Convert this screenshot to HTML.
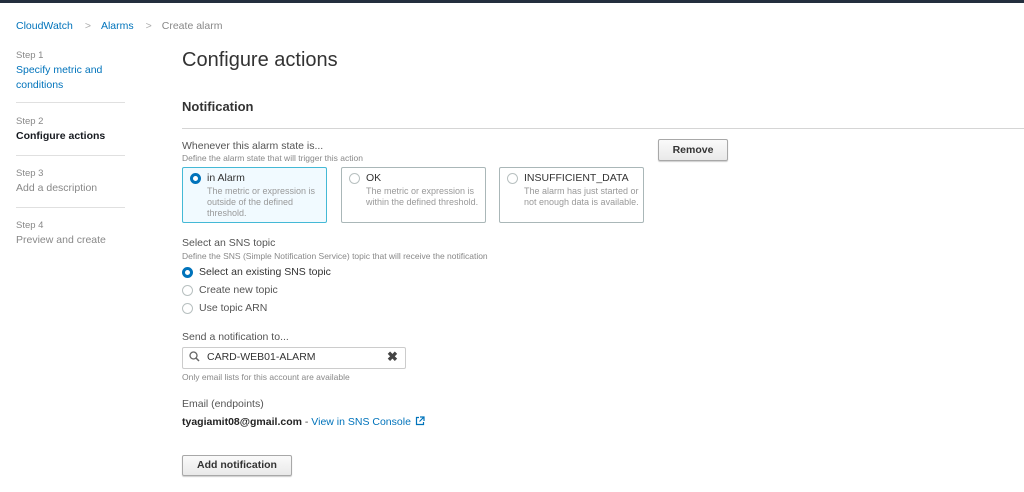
<!DOCTYPE html>
<html><head><style>
body{margin:0;width:1024px;height:492px;background:#fff;font-family:"Liberation Sans",Arial,sans-serif;position:relative;overflow:hidden;color:#444}
.a{position:absolute;white-space:nowrap}
.topbar{position:absolute;left:0;top:0;width:1024px;height:3px;background:#232f3e}
.blue{color:#0073bb}
.s{font-size:9.5px;color:#888}
.t{font-size:10.5px}
.hr{position:absolute;height:1px;background:#e0e0e0}
.box{position:absolute;top:167px;height:54px;width:143px;border:1px solid #aab7b8;border-radius:2px;background:#fff}
.box.sel{border-color:#44b9d6;background:#f1faff}
.rad{position:absolute;width:9px;height:9px;border:1px solid #b8c0c0;border-radius:50%;background:#fff}
.rad.on{border:3px solid #0073bb;width:5px;height:5px}
.btn{position:absolute;border:1px solid #a8a8a8;border-radius:2px;background:linear-gradient(#fafafa,#e9e9e9);font-weight:bold;font-size:10.5px;color:#333;text-align:center;box-shadow:0 1px 1px rgba(0,0,0,.2)}
.bt{font-size:10.5px;color:#333}
.bd{font-size:9px;color:#999;line-height:11px;white-space:normal}
</style></head><body>
<div class="topbar"></div>
<div class="a t" style="left:16px;top:20px"><span class="blue">CloudWatch</span><span style="color:#aaa;margin:0 10px 0 12px">&gt;</span><span class="blue">Alarms</span><span style="color:#aaa;margin:0 10px 0 12px">&gt;</span><span style="color:#888">Create alarm</span></div>

<div class="a s" style="left:16px;top:50px">Step 1</div>
<div class="a t blue" style="left:16px;top:63px;line-height:15px">Specify metric and<br>conditions</div>
<div class="hr" style="left:16px;top:102px;width:109px"></div>
<div class="a s" style="left:16px;top:116px">Step 2</div>
<div class="a t" style="left:16px;top:130px;font-weight:bold;color:#16191f">Configure actions</div>
<div class="hr" style="left:16px;top:155px;width:109px"></div>
<div class="a s" style="left:16px;top:168px">Step 3</div>
<div class="a t" style="left:16px;top:182px;color:#888">Add a description</div>
<div class="hr" style="left:16px;top:207px;width:109px"></div>
<div class="a s" style="left:16px;top:220px">Step 4</div>
<div class="a t" style="left:16px;top:234px;color:#888">Preview and create</div>

<div class="a" style="left:182px;top:49px;font-size:20px;color:#333">Configure actions</div>
<div class="a" style="left:182px;top:99px;font-size:13px;font-weight:bold;color:#333">Notification</div>
<div class="hr" style="left:182px;top:128px;width:842px;background:#d5d5d5"></div>

<div class="a t" style="left:182px;top:140px;color:#555">Whenever this alarm state is...</div>
<div class="a" style="left:182px;top:153px;font-size:8.5px;color:#888">Define the alarm state that will trigger this action</div>
<div class="btn" style="left:658px;top:139px;width:68px;height:20px;line-height:20px">Remove</div>

<div class="box sel" style="left:182px"><div class="rad on" style="left:7px;top:5px"></div><div class="a bt" style="left:24px;top:4px">in Alarm</div><div class="a bd" style="left:24px;top:18px;width:112px">The metric or expression is outside of the defined threshold.</div></div>
<div class="box" style="left:341px"><div class="rad" style="left:7px;top:5px"></div><div class="a bt" style="left:24px;top:4px">OK</div><div class="a bd" style="left:24px;top:18px;width:118px">The metric or expression is within the defined threshold.</div></div>
<div class="box" style="left:499px"><div class="rad" style="left:7px;top:5px"></div><div class="a bt" style="left:24px;top:4px">INSUFFICIENT_DATA</div><div class="a bd" style="left:24px;top:18px;width:118px">The alarm has just started or not enough data is available.</div></div>

<div class="a t" style="left:182px;top:237px;color:#555">Select an SNS topic</div>
<div class="a" style="left:182px;top:251px;font-size:8.5px;color:#888">Define the SNS (Simple Notification Service) topic that will receive the notification</div>
<div class="rad on" style="left:182px;top:267px"></div><div class="a t" style="left:199px;top:266px;color:#333">Select an existing SNS topic</div>
<div class="rad" style="left:182px;top:285px"></div><div class="a t" style="left:199px;top:284px;color:#555">Create new topic</div>
<div class="rad" style="left:182px;top:303px"></div><div class="a t" style="left:199px;top:302px;color:#555">Use topic ARN</div>

<div class="a t" style="left:182px;top:331px;color:#555">Send a notification to...</div>
<div style="position:absolute;left:182px;top:347px;width:222px;height:20px;border:1px solid #ccc;border-radius:2px"></div>
<svg class="a" style="left:189px;top:351px" width="11" height="11" viewBox="0 0 11 11"><circle cx="4.5" cy="4.5" r="3.5" fill="none" stroke="#666" stroke-width="1.3"/><path d="M7 7L10 10" stroke="#666" stroke-width="1.5"/></svg>
<div class="a t" style="left:207px;top:351px;color:#333">CARD-WEB01-ALARM</div>
<div class="a" style="left:387px;top:349px;font-size:13px;font-weight:bold;color:#444">✖</div>
<div class="a" style="left:182px;top:372px;font-size:8.5px;color:#888">Only email lists for this account are available</div>

<div class="a t" style="left:182px;top:398px;color:#555">Email (endpoints)</div>
<div class="a t" style="left:182px;top:416px"><b style="color:#222">tyagiamit08@gmail.com</b> - <span class="blue">View in SNS Console</span><svg style="margin-left:4px;vertical-align:-1px" width="10" height="10" viewBox="0 0 10 10"><path d="M4 1.5H1.5V8.5H8.5V6" fill="none" stroke="#0073bb" stroke-width="1.2"/><path d="M5 1H9V5M9 1L4.5 5.5" fill="none" stroke="#0073bb" stroke-width="1.2"/></svg></div>

<div class="btn" style="left:182px;top:455px;width:108px;height:19px;line-height:19px">Add notification</div>
</body></html>
